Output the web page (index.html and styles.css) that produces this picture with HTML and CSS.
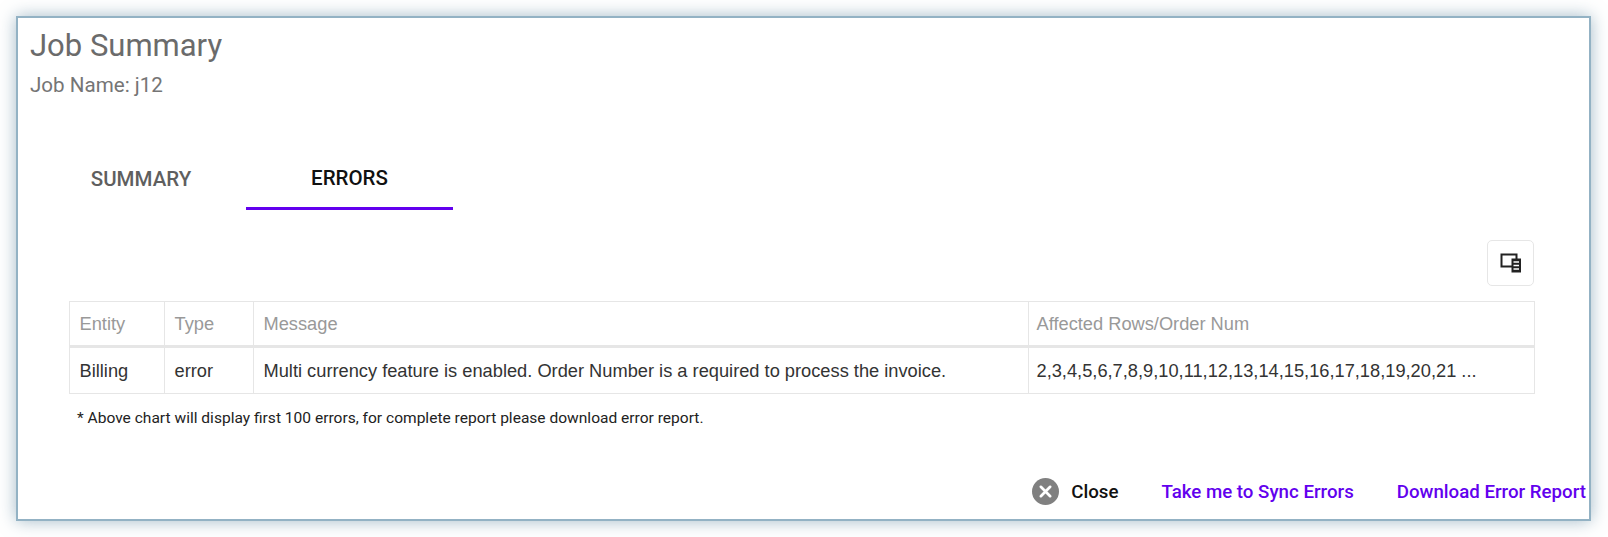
FILE: index.html
```html
<!DOCTYPE html>
<html lang="en">
<head>
  <meta charset="UTF-8" />
  <title>Job Summary</title>
  <link rel="stylesheet" href="styles.css">
</head>
<body>
  <div class="modal">
    <h1>Job Summary</h1>
    <p class="job-name">Job Name: j12</p>

    <div class="tabs">
      <a class="tab">SUMMARY</a>
      <a class="tab active">ERRORS</a>
    </div>

    <div class="toolbar">
      <button class="icon-btn" type="button" aria-label="Columns">
        <svg width="22" height="22" viewBox="0 0 22 22">
          <path d="M1.5 2.5h15v12h-15z" fill="none" stroke="#222" stroke-width="2"/>
          <path d="M11.5 6.5h9.5v14h-9.5z" fill="#222"/>
          <path d="M13.5 10h5.5M13.5 13.5h5.5M13.5 17h5.5" stroke="#fff" stroke-width="1.3"/>
        </svg>
      </button>
    </div>

    <table class="errors">
      <thead>
        <tr>
          <th class="col-entity">Entity</th>
          <th class="col-type">Type</th>
          <th class="col-message">Message</th>
          <th>Affected Rows/Order Num</th>
        </tr>
      </thead>
      <tbody>
        <tr>
          <td>Billing</td>
          <td>error</td>
          <td>Multi currency feature is enabled. Order Number is a required to process the invoice.</td>
          <td>2,3,4,5,6,7,8,9,10,11,12,13,14,15,16,17,18,19,20,21 ...</td>
        </tr>
      </tbody>
    </table>
    <p class="note">* Above chart will display first 100 errors, for complete report please download error report.</p>

    <div class="actions">
      <a class="close">
        <svg width="27" height="27" viewBox="0 0 26 26">
          <circle cx="13" cy="13" r="13" fill="#808080"/>
          <path d="M8.5 8.5l9 9M17.5 8.5l-9 9" stroke="#fff" stroke-width="2.6" stroke-linecap="round"/>
        </svg>
        Close
      </a>
      <a class="link">Take me to Sync Errors</a>
      <a class="link">Download Error Report</a>
    </div>
  </div>
</body>
</html>
```

FILE: styles.css
```css
body {
  margin: 0;
  padding: 16px;
  background: #fff;
  font-family: Roboto, sans-serif;
  height: 537px;
  box-sizing: border-box;
  overflow: hidden;
}
.modal {
  width: 1575px;
  height: 505px;
  box-sizing: border-box;
  background: #fff;
  border: 2px solid #93b2c4;
  box-shadow: 0 0 16px rgba(90, 130, 155, 0.55);
  padding: 10px 0 0 12px;
}
h1 {
  margin: 0;
  font-size: 31px;
  line-height: 36px;
  font-weight: 400;
  color: #6b6b6b;
}
.job-name {
  margin: 9px 0 0;
  font-size: 20.6px;
  line-height: 24px;
  color: #757575;
}
.tabs {
  display: flex;
  margin: 47px 0 0 9px;
}
.tab {
  width: 207px;
  height: 66px;
  box-sizing: border-box;
  padding-top: 4px;
  display: flex;
  align-items: center;
  justify-content: center;
  font-size: 20.5px;
  font-weight: 500;
  color: #5f5f5f;
}
.tab:first-child {
  padding-right: 3px;
}
.tab.active {
  color: #111;
  border-bottom: 3px solid #6200ee;
}
.toolbar {
  display: flex;
  justify-content: flex-end;
  margin: 30px 0 15px;
  padding-right: 55px;
}
.icon-btn {
  width: 47px;
  height: 46px;
  padding: 0;
  display: flex;
  align-items: center;
  justify-content: center;
  background: #fff;
  border: 1px solid #e6e6e6;
  border-radius: 5px;
}
.errors {
  width: 1466px;
  margin-left: 38.5px;
  border-collapse: collapse;
  table-layout: fixed;
  font-family: "Liberation Sans", Arial, sans-serif;
  font-size: 18.25px;
}
.errors th, .errors td {
  border: 1.5px solid #e6e6e6;
  padding: 0 8px 0 10px;
  text-align: left;
  font-weight: 400;
}
.errors th {
  height: 43px;
  color: #999;
  border-bottom-width: 3px;
}
.errors td {
  height: 45px;
  color: #333;
}
.errors th:last-child, .errors td:last-child {
  padding-left: 8px;
}
.col-entity { width: 76px; }
.col-type { width: 70px; }
.col-message { width: 756px; }
.note {
  margin: 15px 0 0 47px;
  font-size: 15.55px;
  line-height: 18px;
  color: #222;
}
.actions {
  display: flex;
  align-items: center;
  justify-content: flex-end;
  margin-top: 51px;
  padding-right: 3px;
  font-size: 18.7px;
  font-weight: 500;
}
.close {
  display: flex;
  align-items: center;
  gap: 12px;
  color: #111;
}
.link {
  margin-left: 43px;
  color: #6200ee;
}
```
